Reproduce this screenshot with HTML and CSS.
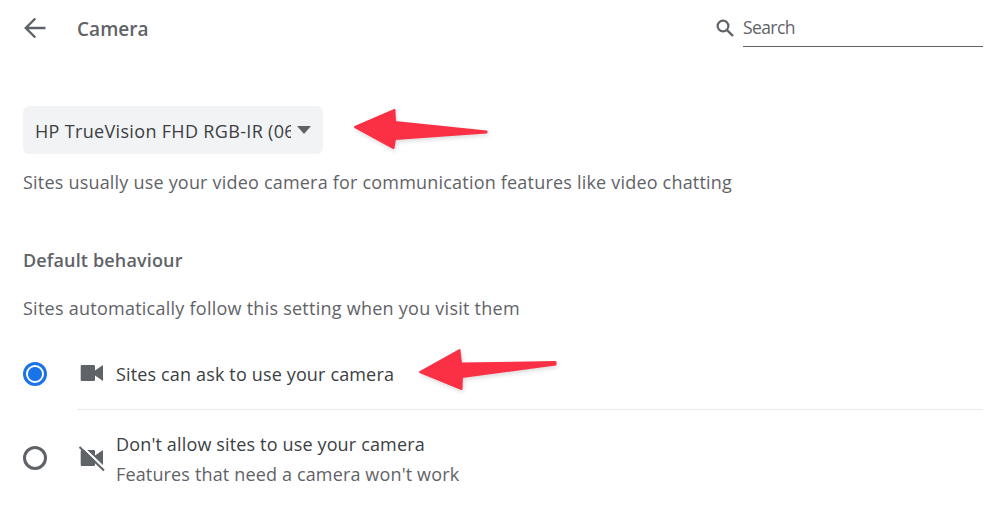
FILE: index.html
```html
<!DOCTYPE html>
<html lang="en">
<head>
<meta charset="utf-8">
<title>Camera</title>
<link rel="stylesheet" href="styles.css">
</head>
<body>
<div class="page">
  <header class="top">
    <svg class="back" viewBox="0 0 24 24" width="24" height="24"><path d="M22.500 12H4M12.300 2.500 2.800 12l9.500 9.500" fill="none" stroke="#5f6368" stroke-width="2.400"/></svg>
    <h1 class="title">Camera</h1>
    <div class="search">
      <svg class="search-icon" viewBox="0 0 18 18" width="18" height="18"><circle cx="7" cy="7" r="5.400" fill="none" stroke="#5f6368" stroke-width="2.200"/><path d="M10.800 10.800 17 17" stroke="#5f6368" stroke-width="2.400"/></svg>
      <div class="search-box">Search</div>
    </div>
  </header>
  <div class="select">
    <span class="select-text">HP TrueVision FHD RGB-IR (06</span>
    <span class="caret"></span>
  </div>
  <p class="desc">Sites usually use your video camera for communication features like video chatting</p>
  <h2 class="section">Default behaviour</h2>
  <p class="desc auto">Sites automatically follow this setting when you visit them</p>
  <div class="option first">
    <span class="radio on"></span>
    <div class="option-body">
      <svg class="cam" viewBox="0 0 24 24" width="24" height="24"><path d="M.700 5.200A1.200 1.200 0 0 1 1.900 4h11.900a1.200 1.200 0 0 1 1.200 1.200V9.500l8-5.500V20l-8-5.500V18.800a1.200 1.200 0 0 1-1.200 1.200H1.900a1.200 1.200 0 0 1-1.200-1.200z" fill="#5f6368"/></svg>
      <div class="label nudge">Sites can ask to use your camera</div>
    </div>
  </div>
  <div class="option second">
    <span class="radio"></span>
    <div class="option-body">
      <svg class="cam" viewBox="0 0 24 24" width="24" height="24"><path d="M.700 5.200A1.200 1.200 0 0 1 1.900 4h11.900a1.200 1.200 0 0 1 1.200 1.200V9.500l8-5.500V20l-8-5.500V18.800a1.200 1.200 0 0 1-1.200 1.200H1.900a1.200 1.200 0 0 1-1.200-1.200z" fill="#5f6368"/><path d="M1 -.500 25 22.500" stroke="#fff" stroke-width="2.200"/><path d="M-.500 1 24 24.500" stroke="#5f6368" stroke-width="2"/></svg>
      <div class="label-group nudge">
        <div class="label">Don't allow sites to use your camera</div>
        <div class="sub">Features that need a camera won't work</div>
      </div>
    </div>
  </div>
  <svg class="arrows" viewBox="0 0 1004 513" width="1004" height="513">
    <path class="arrow" d="M355 127 394.500 110 395 122 486.500 131.500 486.500 132.500 395 139 393.500 148Z"/>
    <path class="arrow" d="M420 372 459.500 350 461 363.500 555.500 362 555.500 364.500 462 377 461.500 389Z"/>
  </svg>
</div>
</body>
</html>
```
FILE: styles.css
```css
* { box-sizing: border-box; }
html, body { margin: 0; padding: 0; background: #fff; }
body { font-family: "Open Sans", "Noto Sans", sans-serif; font-size: 18px; color: #5f6368; overflow: hidden; }
.page { position: relative; width: 1004px; height: 513px; padding: 0 21px 0 23px; }
.top { display: flex; align-items: center; height: 58px; }
.back { flex: none; margin-top: -2px; }
.title { margin: 0 0 0 30px; font-size: 19px; font-weight: 600; color: #5f6368; line-height: 58px; letter-spacing: .05px; }
.search { margin-left: auto; display: flex; align-items: center; gap: 9px; }
.search-icon { margin-top: -3px; }
.search-box { width: 240px; height: 37px; border-bottom: 1px solid #5f6368; line-height: 34px; font-size: 17.500px; letter-spacing: -.6px; margin-top: 10px; margin-bottom: 11px; }
.select { display: flex; align-items: center; width: 300px; height: 48px; margin-top: 48px; padding: 0 12px; background: #f1f3f4; border-radius: 6px; color: #3c4043; font-size: 18px; }
.select-text { width: 256px; overflow: hidden; white-space: nowrap; letter-spacing: .33px; padding-top: 1px; }
.caret { margin-left: 6px; border-style: solid; border-width: 8px 7px 0; border-color: #5f6368 transparent transparent; }
.desc { margin: 14px 0 0; line-height: 28px; font-size: 18px; letter-spacing: .2px; }
.section { margin: 50px 0 0; font-size: 18px; font-weight: 600; line-height: 28px; letter-spacing: .15px; }
.auto { margin-top: 20px; letter-spacing: .25px; }
.option { display: flex; align-items: center; }
.first { margin-top: 15px; height: 73px; }
.second { height: 96px; }
.radio { flex: none; width: 24px; height: 24px; border-radius: 50%; border: 3px solid #5f6368; margin-right: 30px; }
.radio.on { border-color: #1a73e8; background: radial-gradient(circle, #1a73e8 0 6.500px, #fff 7.500px); }
.option-body { flex: 1; display: flex; align-items: center; gap: 12px; height: 100%; padding-left: 3px; }
.first .option-body { border-bottom: 1px solid #e8eaed; }
.cam { flex: none; overflow: visible; }
.nudge { margin-top: 2px; }
.label { color: #3c4043; line-height: 30px; font-size: 18px; letter-spacing: .15px; }
.sub { line-height: 30px; font-size: 18px; letter-spacing: .15px; }
.arrows { position: absolute; left: 0; top: 0; pointer-events: none; }
.arrow { fill: #fb3044; stroke: #fb3044; stroke-width: 2; stroke-linejoin: round; filter: drop-shadow(1px 2px 2px rgba(0,0,0,.15)); }
```
